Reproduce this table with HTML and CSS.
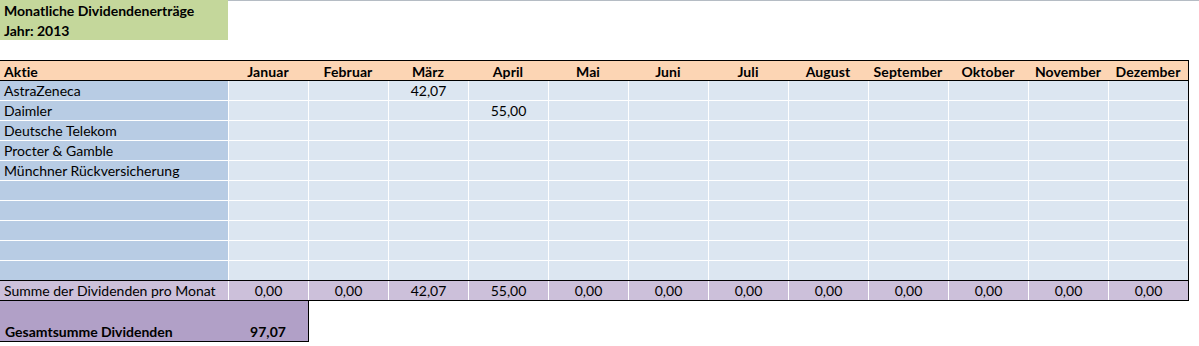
FILE: index.html
```html
<!DOCTYPE html>
<html lang="de">
<head>
<meta charset="utf-8">
<title>Monatliche Dividendenerträge</title>
<link rel="stylesheet" href="styles.css">
</head>
<body>
<div class="sheet">
  <div class="top">
    <div class="title">
      <div class="title-line">Monatliche Dividendenerträge</div>
      <div class="title-line">Jahr: 2013</div>
    </div>
    <div class="top-rest"></div>
  </div>
  <div class="spacer"></div>
  <div class="grid">
    <div class="row head">
      <div class="cell name">Aktie</div>
      <div class="cell m">Januar</div>
      <div class="cell m">Februar</div>
      <div class="cell m">März</div>
      <div class="cell m">April</div>
      <div class="cell m">Mai</div>
      <div class="cell m">Juni</div>
      <div class="cell m">Juli</div>
      <div class="cell m">August</div>
      <div class="cell m">September</div>
      <div class="cell m">Oktober</div>
      <div class="cell m">November</div>
      <div class="cell m">Dezember</div>
    </div>
    <div class="row data">
      <div class="cell name">AstraZeneca</div>
      <div class="cell m"></div><div class="cell m"></div><div class="cell m">42,07</div><div class="cell m"></div><div class="cell m"></div><div class="cell m"></div><div class="cell m"></div><div class="cell m"></div><div class="cell m"></div><div class="cell m"></div><div class="cell m"></div><div class="cell m"></div>
    </div>
    <div class="row data">
      <div class="cell name">Daimler</div>
      <div class="cell m"></div><div class="cell m"></div><div class="cell m"></div><div class="cell m">55,00</div><div class="cell m"></div><div class="cell m"></div><div class="cell m"></div><div class="cell m"></div><div class="cell m"></div><div class="cell m"></div><div class="cell m"></div><div class="cell m"></div>
    </div>
    <div class="row data">
      <div class="cell name">Deutsche Telekom</div>
      <div class="cell m"></div><div class="cell m"></div><div class="cell m"></div><div class="cell m"></div><div class="cell m"></div><div class="cell m"></div><div class="cell m"></div><div class="cell m"></div><div class="cell m"></div><div class="cell m"></div><div class="cell m"></div><div class="cell m"></div>
    </div>
    <div class="row data">
      <div class="cell name">Procter &amp; Gamble</div>
      <div class="cell m"></div><div class="cell m"></div><div class="cell m"></div><div class="cell m"></div><div class="cell m"></div><div class="cell m"></div><div class="cell m"></div><div class="cell m"></div><div class="cell m"></div><div class="cell m"></div><div class="cell m"></div><div class="cell m"></div>
    </div>
    <div class="row data">
      <div class="cell name">Münchner Rückversicherung</div>
      <div class="cell m"></div><div class="cell m"></div><div class="cell m"></div><div class="cell m"></div><div class="cell m"></div><div class="cell m"></div><div class="cell m"></div><div class="cell m"></div><div class="cell m"></div><div class="cell m"></div><div class="cell m"></div><div class="cell m"></div>
    </div>
    <div class="row data">
      <div class="cell name"></div>
      <div class="cell m"></div><div class="cell m"></div><div class="cell m"></div><div class="cell m"></div><div class="cell m"></div><div class="cell m"></div><div class="cell m"></div><div class="cell m"></div><div class="cell m"></div><div class="cell m"></div><div class="cell m"></div><div class="cell m"></div>
    </div>
    <div class="row data">
      <div class="cell name"></div>
      <div class="cell m"></div><div class="cell m"></div><div class="cell m"></div><div class="cell m"></div><div class="cell m"></div><div class="cell m"></div><div class="cell m"></div><div class="cell m"></div><div class="cell m"></div><div class="cell m"></div><div class="cell m"></div><div class="cell m"></div>
    </div>
    <div class="row data">
      <div class="cell name"></div>
      <div class="cell m"></div><div class="cell m"></div><div class="cell m"></div><div class="cell m"></div><div class="cell m"></div><div class="cell m"></div><div class="cell m"></div><div class="cell m"></div><div class="cell m"></div><div class="cell m"></div><div class="cell m"></div><div class="cell m"></div>
    </div>
    <div class="row data">
      <div class="cell name"></div>
      <div class="cell m"></div><div class="cell m"></div><div class="cell m"></div><div class="cell m"></div><div class="cell m"></div><div class="cell m"></div><div class="cell m"></div><div class="cell m"></div><div class="cell m"></div><div class="cell m"></div><div class="cell m"></div><div class="cell m"></div>
    </div>
    <div class="row data last">
      <div class="cell name"></div>
      <div class="cell m"></div><div class="cell m"></div><div class="cell m"></div><div class="cell m"></div><div class="cell m"></div><div class="cell m"></div><div class="cell m"></div><div class="cell m"></div><div class="cell m"></div><div class="cell m"></div><div class="cell m"></div><div class="cell m"></div>
    </div>
    <div class="row sum">
      <div class="cell name">Summe der Dividenden pro Monat</div>
      <div class="cell m">0,00</div><div class="cell m">0,00</div><div class="cell m">42,07</div><div class="cell m">55,00</div><div class="cell m">0,00</div><div class="cell m">0,00</div><div class="cell m">0,00</div><div class="cell m">0,00</div><div class="cell m">0,00</div><div class="cell m">0,00</div><div class="cell m">0,00</div><div class="cell m">0,00</div>
    </div>
  </div>
  <div class="total">
    <div class="total-label">Gesamtsumme Dividenden</div>
    <div class="total-value">97,07</div>
  </div>
</div>
</body>
</html>
```

FILE: styles.css
```css
* { box-sizing: border-box; }
html, body { margin: 0; padding: 0; background: #ffffff; }
body {
  font-family: Lato, "Liberation Sans", sans-serif;
  font-size: 14px;
  color: #000;
}
.sheet { width: 1199px; }
.top { display: flex; height: 40px; }
.title {
  width: 228px;
  background: #c4d79b;
  font-weight: bold;
  font-size: 14px;
  letter-spacing: 0;
  padding-left: 4px;
}
.title-line { height: 20px; line-height: 21px; }
.top-rest { flex: 1; border-top: 1px solid #b5bcc4; }
.spacer { height: 20px; }
.grid { width: 1189px; border-right: 1px solid #000; }
.row { display: flex; }
.cell { height: 100%; white-space: nowrap; overflow: hidden; }
.name { width: 228px; padding-left: 4px; }
.m { width: 80px; border-left: 1px solid #fff; text-align: center; }
.head {
  height: 21px;
  border-top: 1px solid #000;
  border-bottom: 1px solid #000;
  background: #fcd5b4;
  font-weight: bold;
  font-size: 14px;
  letter-spacing: 0.1px;
  line-height: 21px;
}
.head .m { border-left: none; width: 80px; }
.head .name { width: 228px; }
.data { height: 20px; border-bottom: 1px solid #fff; line-height: 20px; }
.data.last { border-bottom-color: #000; }
.data .name { background: #b8cce4; }
.data .m { background: #dce6f1; }
.sum {
  height: 20px;
  border-bottom: 1px solid #000;
  background: #ccc0da;
  line-height: 20px;
}
.total {
  display: flex;
  align-items: flex-end;
  width: 309px;
  height: 41px;
  background: #b1a0c7;
  border-right: 1px solid #000;
  border-bottom: 1px solid #000;
  font-weight: bold;
  font-size: 14px;
  padding-bottom: 1px;
}
.total-label { width: 228px; padding-left: 5px; }
.total-value { width: 80px; text-align: center; }
```
